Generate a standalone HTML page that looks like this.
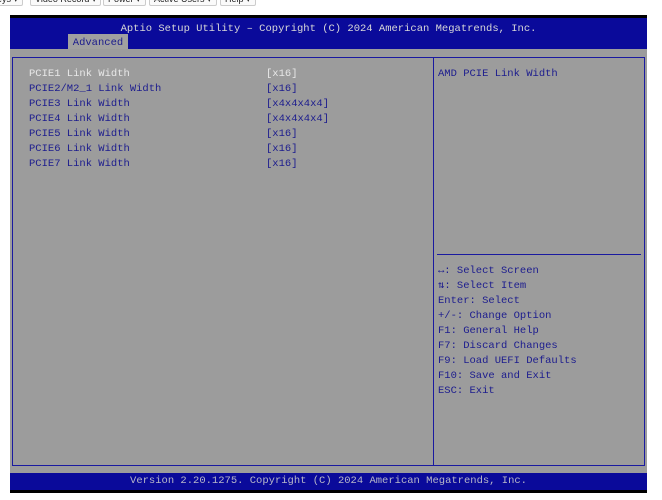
<!DOCTYPE html>
<html><head><meta charset="utf-8"><style>
body{margin:0;width:662px;height:500px;background:#fff;position:relative;overflow:hidden;font-family:"Liberation Mono",monospace;}
.btn{position:absolute;top:-7px;height:11px;border:1px solid #ccc;border-radius:2px;font:9px "Liberation Sans",sans-serif;color:#222;line-height:10px;padding:0 4px;background:#fafafa}
.scr{position:absolute;left:10px;top:15px;width:637px;height:478px;background:#000;}
.hdr{position:absolute;left:10px;top:18px;width:637px;height:31px;background:#0a0a9a;}
.title{position:absolute;left:0;width:637px;top:5px;text-align:center;color:#d8d8d8;font-size:10.5px;}
.tab{position:absolute;left:58px;top:16px;width:60px;height:15px;background:#a0a0a0;color:#1a1a8c;font-size:10.5px;line-height:18px;text-align:center;}
.body{position:absolute;left:10px;top:49px;width:637px;height:424px;background:#9c9c9c;}
.frame{position:absolute;left:12px;top:57px;width:631px;height:407px;border:1px solid #1a1aa0;}
.div{position:absolute;left:433px;top:57px;width:1px;height:409px;background:#1a1aa0;}
.hl{position:absolute;left:437px;top:254px;width:204px;height:1px;background:#1a1aa0;}
.t{position:absolute;font-size:10.5px;color:#1c1c8e;white-space:pre;line-height:15px;}
.ftr{position:absolute;left:10px;top:473px;width:637px;height:17px;background:#0a0a9a;color:#b8b8c8;font-size:10.5px;text-align:center;line-height:17px;}
</style></head><body>
<div class="btn" style="left:-8px">eys ▾</div>
<div class="btn" style="left:30px">Video Record ▾</div>
<div class="btn" style="left:103px">Power ▾</div>
<div class="btn" style="left:149px">Active Users ▾</div>
<div class="btn" style="left:220px">Help ▾</div>
<div class="scr"></div>
<div class="hdr"><div class="title">Aptio Setup Utility – Copyright (C) 2024 American Megatrends, Inc.</div><div class="tab">Advanced</div></div>
<div class="body"></div>
<div class="frame"></div>
<div class="div"></div>
<div class="hl"></div>
<div class="t" style="left:29px;top:67px"><span style="color:#e8e8e8">PCIE1 Link Width</span>
PCIE2/M2_1 Link Width
PCIE3 Link Width
PCIE4 Link Width
PCIE5 Link Width
PCIE6 Link Width
PCIE7 Link Width</div>
<div class="t" style="left:266px;top:67px"><span style="color:#e8e8e8">[x16]</span>
[x16]
[x4x4x4x4]
[x4x4x4x4]
[x16]
[x16]
[x16]</div>
<div class="t" style="left:438px;top:67px">AMD PCIE Link Width</div>
<div class="t" style="left:438px;top:264px">↔: Select Screen
⇅: Select Item
Enter: Select
+/-: Change Option
F1: General Help
F7: Discard Changes
F9: Load UEFI Defaults
F10: Save and Exit
ESC: Exit</div>
<div class="ftr">Version 2.20.1275. Copyright (C) 2024 American Megatrends, Inc.</div>
</body></html>
